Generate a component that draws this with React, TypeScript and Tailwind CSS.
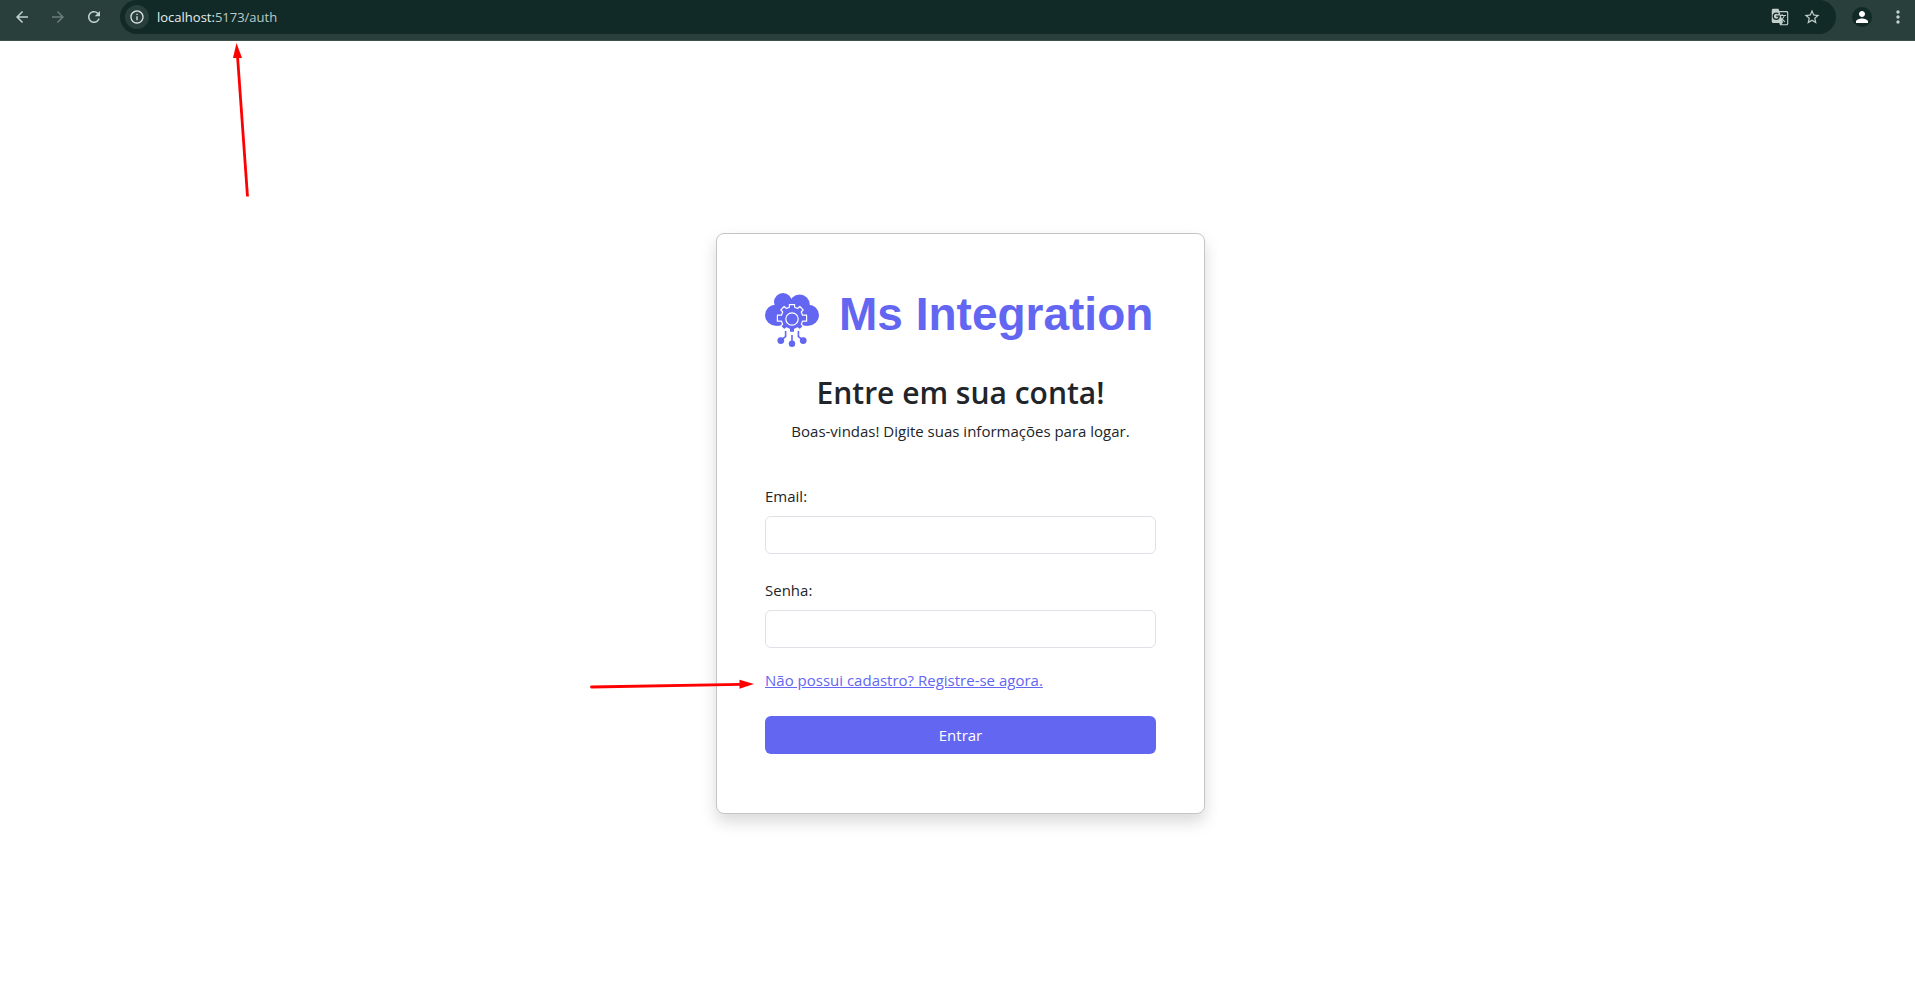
import React from "react";
import {
  MdArrowBack,
  MdArrowForward,
  MdGTranslate,
  MdInfoOutline,
  MdMoreVert,
  MdPerson,
  MdRefresh,
  MdStarOutline,
} from "react-icons/md";

function BrowserBar() {
  return (
    <header className="flex h-[41px] w-full items-start border-b border-[#3d504b] bg-[#283f3b] font-['Open_Sans',sans-serif]">
      <nav className="flex h-[34px] items-center gap-[18px] pr-[17px] pl-[13px] text-[#c0d3ce]">
        <button type="button" aria-label="Voltar">
          <MdArrowBack size={18} />
        </button>
        <button type="button" aria-label="Avançar" className="text-[#6a7e79]">
          <MdArrowForward size={18} />
        </button>
        <button type="button" aria-label="Recarregar">
          <MdRefresh size={18} />
        </button>
      </nav>
      <div className="flex h-[34px] flex-1 items-center rounded-full bg-[#112a27] pr-[15px] pl-[5px] text-[#c4cfcc]">
        <button
          type="button"
          aria-label="Informações do site"
          className="flex size-6 items-center justify-center rounded-full bg-[#283f3b] text-[#dbe3e1]"
        >
          <MdInfoOutline size={16} />
        </button>
        <p className="flex-1 pl-2 text-[13px] leading-5">
          <span className="text-[#e8efed]">localhost:</span>
          <span className="text-[#bccbc7]">5173/auth</span>
        </p>
        <div className="flex items-center gap-[14px]">
          <button type="button" aria-label="Traduzir">
            <MdGTranslate size={18} />
          </button>
          <button type="button" aria-label="Favoritar">
            <MdStarOutline size={18} />
          </button>
        </div>
      </div>
      <div className="flex h-[34px] items-center gap-4 pr-[7px] pl-4">
        <button
          type="button"
          aria-label="Perfil"
          className="flex size-5 items-center justify-center rounded-full bg-[#112a27] text-white"
        >
          <MdPerson size={18} />
        </button>
        <button type="button" aria-label="Menu" className="text-[#c0d3ce]">
          <MdMoreVert size={20} />
        </button>
      </div>
    </header>
  );
}

const gearPath =
  "M24.4 14.2 L24.4 11.6 H29.6 L29.6 14.2 L32.6 15.5 L34.8 13.5 L38.2 16.9 L36.3 19 L37.5 22.2 H41.6 V28.2 H37.5 L36.3 31.2 L38.2 33.3 L34.8 36.7 L32.6 34.9 L29.6 36.2 V39.4 H24.4 V36.2 L21.4 34.9 L19.2 36.7 L15.8 33.3 L17.7 31.2 L16.5 28.2 H12.4 V22.2 H16.5 L17.7 19 L15.8 16.9 L19.2 13.5 L21.4 15.5 Z";

function CloudGear() {
  return (
    <svg viewBox="0 0 54 54" className="size-[54px] shrink-0" aria-hidden="true">
      <g fill="#6366f1">
        <circle cx="10.5" cy="22.2" r="10.5" />
        <circle cx="18" cy="9" r="9" />
        <circle cx="34.6" cy="11.8" r="10.2" />
        <circle cx="43.5" cy="22.2" r="10.5" />
        <path d="M10.5 32.7 V12 H43.5 V32.7 Z" />
      </g>
      <path d="M15 33 L19 30 H35 L39 33 L35 38 H19 Z" fill="#fff" />
      <path d={gearPath} fill="#6366f1" stroke="#fff" strokeWidth="1.2" strokeLinejoin="round" />
      <circle cx="27" cy="26" r="6.2" fill="#6366f1" stroke="#fff" strokeWidth="1.2" />
      <g fill="none" stroke="#6366f1" strokeWidth="1.6">
        <path d="M27 42 V50" />
        <path d="M20.6 38 V43.6 L16 47" />
        <path d="M33.4 38 V43.6 L38 47" />
      </g>
      <g fill="#6366f1">
        <circle cx="27" cy="50.8" r="3.2" />
        <circle cx="15.8" cy="47.6" r="3.4" />
        <circle cx="38.2" cy="47.6" r="3.4" />
      </g>
    </svg>
  );
}

function Field({ id, label, type }: { id: string; label: string; type: string }) {
  return (
    <div className="mb-6 flex flex-col gap-2 last-of-type:mb-5">
      <label htmlFor={id} className="self-start">
        {label}
      </label>
      <input
        id={id}
        type={type}
        className="h-[38px] w-full rounded-md border border-[#dee2e6] bg-white px-3 outline-none"
      />
    </div>
  );
}

function LoginCard() {
  return (
    <section className="w-[489px] rounded-lg border border-[#c4c5c7] bg-white px-12 pt-[59px] pb-[59px] text-[15px] leading-6 text-[#212529] shadow-[0_8px_16px_rgba(0,0,0,0.15)]">
      <div className="flex h-[54px] items-center gap-5">
        <CloudGear />
        <span className="pb-3 font-['Liberation_Sans',Arial,sans-serif] text-[46px] leading-[54px] font-bold whitespace-nowrap text-[#6366f1]">
          Ms Integration
        </span>
      </div>
      <h1 className="mt-[27px] text-center text-[30px] leading-[38px] font-semibold">Entre em sua conta!</h1>
      <p className="mt-[7px] mb-[41px] text-center">Boas-vindas! Digite suas informações para logar.</p>
      <form onSubmit={(event) => event.preventDefault()}>
        <Field id="email" label="Email:" type="email" />
        <Field id="senha" label="Senha:" type="password" />
        <a href="#cadastro" className="block w-fit text-[#6366f1] underline">
          Não possui cadastro? Registre-se agora.
        </a>
        <button type="submit" className="mt-6 h-[38px] w-full rounded-md bg-[#6366f1] text-white">
          Entrar
        </button>
      </form>
    </section>
  );
}

export default function App() {
  return (
    <div className="relative flex min-h-screen flex-col bg-white font-['Open_Sans',sans-serif]">
      <BrowserBar />
      <main className="flex flex-1 items-center justify-center pt-[11px] pl-[6px]">
        <LoginCard />
      </main>
      <svg
        className="pointer-events-none absolute top-[42px] left-[230px] h-[158px] w-[22px]"
        viewBox="0 0 22 158"
        aria-hidden="true"
      >
        <path d="M7.5 14 L17.5 154.5" stroke="#ff0000" strokeWidth="2.8" />
        <path d="M6.5 1 L12 16 L3 16 Z" fill="#ff0000" />
      </svg>
      <svg
        className="pointer-events-none absolute top-[676px] left-[588px] h-5 w-[170px]"
        viewBox="0 0 170 20"
        aria-hidden="true"
      >
        <path d="M3.5 11 L153 8.3" stroke="#ff0000" strokeWidth="2.8" strokeLinecap="round" />
        <path d="M166 8 L151.5 3.8 L151.5 12.8 Z" fill="#ff0000" />
      </svg>
    </div>
  );
}
